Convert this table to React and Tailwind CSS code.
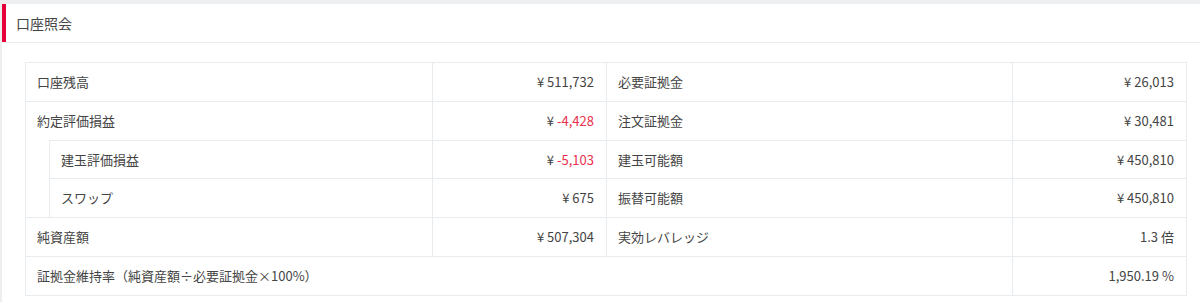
import React from "react";

const FONT = { fontFamily: '"Noto Sans CJK JP", "Noto Sans", sans-serif' };

function Yen({ v, red }) {
  return (
    <span>
      <span className="mr-[3px]">¥</span>
      <span className={red ? "text-[#e8304e]" : ""}>{v}</span>
    </span>
  );
}

function Label({ children, className = "" }) {
  return (
    <div className={`flex items-center pl-[11px] ${className}`}>{children}</div>
  );
}

function Value({ children, className = "" }) {
  return (
    <div
      className={`flex items-center justify-end pr-[12px] border-l border-[#e6ecf0] ${className}`}
    >
      {children}
    </div>
  );
}

function Row({ l1, v1, l2, v2, top = true, nested = false, h = "h-[39px]" }) {
  return (
    <div className={`flex ${h}`}>
      {nested ? <div className="w-[23px] shrink-0" /> : null}
      <Label
        className={`${nested ? "w-[383px] border-l" : "w-[406px]"} ${
          top ? "border-t" : ""
        } border-[#e6ecf0] shrink-0`}
      >
        {l1}
      </Label>
      <Value className={`w-[174px] shrink-0 ${top ? "border-t" : ""}`}>{v1}</Value>
      <Label
        className={`w-[406px] shrink-0 border-l border-[#e6ecf0] ${
          top ? "border-t" : ""
        }`}
      >
        {l2}
      </Label>
      <Value className={`w-[174px] shrink-0 ${top ? "border-t" : ""}`}>{v2}</Value>
    </div>
  );
}

export default function App() {
  return (
    <div
      className="w-[1200px] h-[302px] bg-[#eceef0] pt-[4px] pl-[2px] overflow-hidden text-[13px] text-[#444]"
      style={FONT}
    >
      <div className="bg-white h-full">
        <div className="flex h-[39px] border-b border-[#e9ecee]">
          <div className="w-[4px] h-[38px] bg-[#e60039]" />
          <div className="flex items-center pl-[10px] text-[14px] text-[#444] h-[38px]">
            口座照会
          </div>
        </div>
        <div className="pl-[23px] pt-[19px]">
          <div className="w-[1162px] border border-[#e6ecf0]">
            <Row
              top={false}
              h="h-[38px]"
              l1="口座残高"
              v1={<Yen v="511,732" />}
              l2="必要証拠金"
              v2={<Yen v="26,013" />}
            />
            <Row
              l1="約定評価損益"
              v1={<Yen v="-4,428" red />}
              l2="注文証拠金"
              v2={<Yen v="30,481" />}
            />
            <Row
              nested
              h="h-[38px]"
              l1="建玉評価損益"
              v1={<Yen v="-5,103" red />}
              l2="建玉可能額"
              v2={<Yen v="450,810" />}
            />
            <Row
              nested
              l1="スワップ"
              v1={<Yen v="675" />}
              l2="振替可能額"
              v2={<Yen v="450,810" />}
            />
            <Row
              l1="純資産額"
              v1={<Yen v="507,304" />}
              l2="実効レバレッジ"
              v2={
                <span>
                  1.3<span className="ml-[3px]">倍</span>
                </span>
              }
            />
            <div className="flex h-[39px]">
              <Label className="w-[986px] shrink-0 border-t border-[#e6ecf0]">
                証拠金維持率（純資産額÷必要証拠金×100%）
              </Label>
              <Value className="w-[174px] shrink-0 border-t">
                <span>
                  1,950.19<span className="ml-[3px]">%</span>
                </span>
              </Value>
            </div>
          </div>
        </div>
      </div>
    </div>
  );
}
